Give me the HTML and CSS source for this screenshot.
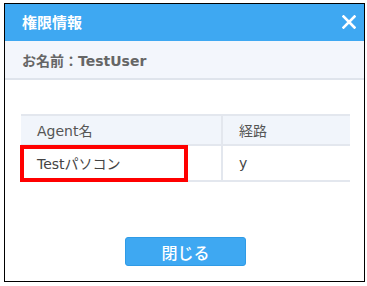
FILE: index.html
```
<!DOCTYPE html>
<html lang="ja">
  <head>
    <meta charset="UTF-8"/>
    <title>権限情報</title>
    <link rel="stylesheet" href="styles.css">
  </head>
  <body>
    <div class="dialog">
      <div class="header">
        <h1>権限情報</h1>
        <svg class="close" width="14" height="14" viewBox="0 0 14 14">
          <path d="M1.5 1.5 L12.5 12.5 M12.5 1.5 L1.5 12.5" stroke="#fff" stroke-width="2.6" stroke-linecap="square"/>
        </svg>
      </div>

      <div class="user">お名前：TestUser</div>

      <div class="content">
        <table class="perm">
          <tr>
            <th class="col-agent">Agent名</th>
            <th>経路</th>
          </tr>
          <tr>
            <td class="col-agent"><span class="mark"></span>Testパソコン</td>
            <td>y</td>
          </tr>
        </table>
      </div>

      <div class="footer">
        <button class="btn">閉じる</button>
      </div>
    </div>
  </body>
</html>
```

FILE: styles.css
```
*{
  margin: 0;
  box-sizing: border-box;
  font-family: "DejaVu Sans", "Noto Sans CJK JP", sans-serif;
}

body{
  background-color: #fff;
  padding: 3px 2px 4px 4px;
}

.dialog{
  border: 1px solid #000;
  height: 279px;
  display: flex;
  flex-direction: column;
}

.header{
  background-color: #3ea8f2;
  height: 37px;
  display: flex;
  align-items: center;
  justify-content: space-between;
  padding: 0 8px 2px 17px;
}

.header h1{
  color: #fff;
  font-size: 15px;
  font-weight: bold;
}

.user{
  background-color: #f3f6fc;
  border-bottom: 2px solid #dfe4ec;
  height: 39px;
  display: flex;
  align-items: center;
  padding-left: 17px;
  color: #666;
  font-size: 14px;
  font-weight: bold;
}

.content{
  padding: 34px 14px 0 16px;
}

.perm{
  width: 329px;
  border-collapse: collapse;
  font-size: 14px;
  color: #444;
}

.perm th, .perm td{
  text-align: left;
  padding: 0 0 0 16px;
  border-top: 2px solid #e3e7ee;
  border-bottom: 2px solid #e3e7ee;
}

.perm th + th, .perm td + td{
  border-left: 2px solid #e3e7ee;
}

.perm th{
  background-color: #f1f5fb;
  height: 30px;
  font-weight: normal;
  color: #555;
}

.perm td{
  height: 36px;
}

.perm .col-agent{
  width: 201px;
  position: relative;
}

.mark{
  position: absolute;
  left: -1px;
  top: -1px;
  width: 168px;
  height: 37px;
  border: 4px solid #f00;
}

.footer{
  margin-top: auto;
  padding-bottom: 15px;
  display: flex;
  justify-content: center;
}

.btn{
  width: 121px;
  height: 29px;
  margin-left: 2px;
  background-color: #3ea8f2;
  border: 1px solid #2f9be6;
  border-radius: 3px;
  color: #fff;
  font-size: 16px;
  font-family: "Noto Sans CJK JP", sans-serif;
  font-weight: 500;
}
```
